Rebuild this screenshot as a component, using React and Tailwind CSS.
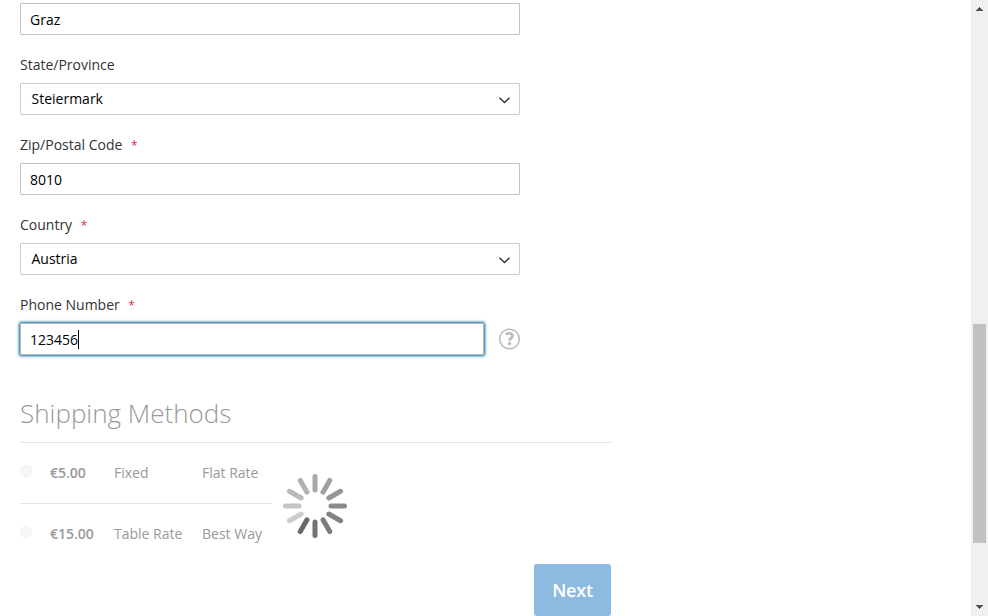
import React from 'react';

const SPOKES = ['#a8a8a8', '#9f9f9f', '#969696', '#8b8b8b', '#828282', '#7b7b7b', '#737373', '#686868', '#cccccc', '#c4c4c4', '#bababa', '#b1b1b1'];

function Label({ text, required }) {
  return (
    <div className="flex h-12 items-start pt-5 text-[14px] leading-5 text-[#333]">
      <span>{text}</span>
      {required && <span className="ml-[8.5px] mt-px text-[12px] leading-5 text-[#e02b4a]">*</span>}
    </div>
  );
}

function TextBox({ children }) {
  return (
    <div className="flex h-8 w-[500px] items-center rounded-[1px] border border-[#c2c2c2] bg-white px-[9px] pt-0.5 text-[14px] leading-5 text-black">
      {children}
    </div>
  );
}

function SelectBox({ children }) {
  return (
    <div className="flex h-8 w-[500px] items-center justify-between rounded-[1px] border border-[#ccc] bg-white pl-[10.5px] pr-[9px] text-[14px] leading-5 text-black">
      <span>{children}</span>
      <svg className="mt-[3px]" width="11" height="7" viewBox="0 0 11 7" fill="none" stroke="#333" strokeWidth="1.4">
        <path d="M.5.7 5.5 5.5 10.500.7" />
      </svg>
    </div>
  );
}

function Rate({ price, method, carrier, divided }) {
  return (
    <div className={divided ? 'flex h-[61px] w-[252px] items-center border-b border-[#e3e3e3]' : 'flex h-[60px] w-[252px] items-center'}>
      <span className="mb-[5px] mr-[18px] size-3 shrink-0 rounded-full border border-[#efefef] bg-[#f7f7f7]" />
      <span className="w-16 shrink-0 font-semibold">{price}</span>
      <span className="w-[88px] shrink-0">{method}</span>
      <span className="whitespace-nowrap">{carrier}</span>
    </div>
  );
}

function Spinner() {
  return (
    <svg className="absolute left-[283px] top-[474px]" width="64" height="64" viewBox="-32 -32 64 64">
      {SPOKES.map((color, i) => (
        <line key={i} x1="0" y1="-16" x2="0" y2="-29.500" stroke={color} strokeWidth="5" strokeLinecap="round" transform={`rotate(${i * 30})`} />
      ))}
    </svg>
  );
}

export default function App() {
  return (
    <div className="relative flex h-[616px] w-[988px] justify-between overflow-hidden bg-white font-['Open_Sans','Noto_Sans',sans-serif]">
      <main className="w-[611px] pl-5 pt-[3px]">
        <TextBox>Graz</TextBox>
        <Label text="State/Province" />
        <SelectBox>Steiermark</SelectBox>
        <Label text="Zip/Postal Code" required />
        <TextBox>8010</TextBox>
        <Label text="Country" required />
        <SelectBox>Austria</SelectBox>
        <Label text="Phone Number" required />
        <div className="flex items-center">
          <div className="flex h-8 w-[464px] items-center rounded-[1px] border border-[#b8b8b8] bg-white pl-[9px] pt-0.5 text-[14px] leading-5 text-black shadow-[0_0_3px_1px_#00699d]">
            123456<span className="-mt-0.5 h-[19px] w-px bg-black" />
          </div>
          <svg className="ml-3.5" width="23" height="22" viewBox="0 0 23 22" fill="none" stroke="#bbb">
            <circle cx="11.500" cy="11" r="9.800" strokeWidth="1.500" />
            <path d="M7.800 6.300C9.700 4.900 14.500 4.700 14.500 7.900C14.500 10.200 11.500 10.100 11.500 12.700" strokeWidth="2.800" />
            <path d="M11.500 14.300V17.100" strokeWidth="3" />
          </svg>
        </div>
        <h2 className="mt-10 flex h-12 items-start border-b border-[#e3e3e3] text-[26px] font-light leading-[36px] text-[#999]">Shipping Methods</h2>
        <div className="text-[14px] leading-5 text-[#999]">
          <Rate price="€5.00" method="Fixed" carrier="Flat Rate" divided />
          <Rate price="€15.00" method="Table Rate" carrier="Best Way" />
        </div>
        <div className="flex justify-end">
          <div className="flex h-[52px] w-[77px] items-center justify-center rounded-[3px] bg-[#8cbae0] text-[18px] font-[650] tracking-[-0.2px] text-white">Next</div>
        </div>
      </main>
      <aside className="flex h-full w-[17px] flex-col items-center bg-[#f0f0f0]">
        <svg className="mt-[7px]" width="7" height="4" viewBox="0 0 7 4" shapeRendering="crispEdges"><path d="M0 4V3H1V2H2V1H3V0H4V1H5V2H6V3H7V4Z" fill="#505050" /></svg>
        <div className="mt-[313px] h-[219px] w-[13px] bg-[#c1c1c1]" />
        <svg className="mt-[62px]" width="7" height="4" viewBox="0 0 7 4" shapeRendering="crispEdges"><path d="M0 0V1H1V2H2V3H3V4H4V3H5V2H6V1H7V0Z" fill="#505050" /></svg>
      </aside>
      <Spinner />
    </div>
  );
}
